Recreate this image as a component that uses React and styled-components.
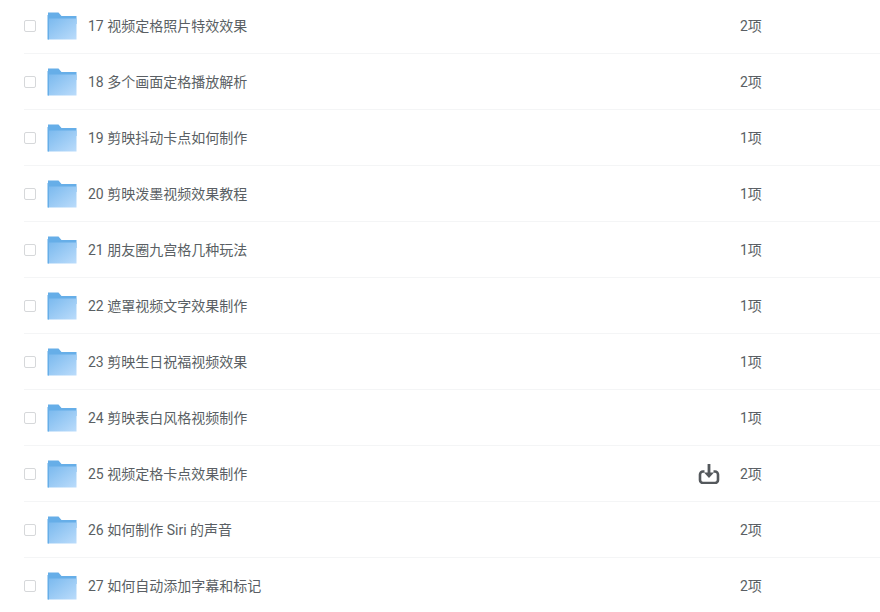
import React from 'react';
import styled, { createGlobalStyle } from 'styled-components';

const GlobalStyle = createGlobalStyle`
  html, body {
    margin: 0;
    height: 100%;
    overflow: hidden;
    background: #fff;
  }
`;

const FileList = styled.div`
  margin-top: -2px;
  padding-left: 24px;
  font-family: Roboto, "Noto Sans CJK SC", sans-serif;
  font-size: 14px;
  color: #5a5f64;
`;

const Row = styled.div`
  display: flex;
  align-items: center;
  height: 55px;
  border-bottom: 1px solid #f4f5f6;
`;

const Check = styled.span`
  box-sizing: border-box;
  flex: none;
  width: 12px;
  height: 12px;
  border: 1px solid #d6d8da;
  border-radius: 2px;
  background: #fff;
`;

const FolderIcon = styled.svg`
  flex: none;
  width: 30px;
  height: 28px;
  margin-left: 11px;
`;

const Name = styled.span`
  flex: none;
  width: 610px;
  margin: 0 0 2px 11px;
  white-space: nowrap;
`;

const Action = styled.span`
  flex: none;
  display: flex;
  justify-content: center;
  width: 22px;
  margin-right: 20px;
  color: #54585c;
`;

const Count = styled.span`
  flex: none;
  margin-bottom: 2px;
`;

const rows = [
  ['17 视频定格照片特效效果', '2项'],
  ['18 多个画面定格播放解析', '2项'],
  ['19 剪映抖动卡点如何制作', '1项'],
  ['20 剪映泼墨视频效果教程', '1项'],
  ['21 朋友圈九宫格几种玩法', '1项'],
  ['22 遮罩视频文字效果制作', '1项'],
  ['23 剪映生日祝福视频效果', '1项'],
  ['24 剪映表白风格视频制作', '1项'],
  ['25 视频定格卡点效果制作', '2项', true],
  ['26 如何制作 Siri 的声音', '2项'],
  ['27 如何自动添加字幕和标记', '2项'],
];

function Folder({ id }) {
  return (
    <FolderIcon viewBox="0 0 30 28">
      <defs>
        <linearGradient id={id} x1="0" y1="0" x2="1" y2="1">
          <stop offset="0" stopColor="#7ab9ee" />
          <stop offset="1" stopColor="#bbdcfb" />
        </linearGradient>
      </defs>
      <path d="M1 0.5h10.5l3 3.5H29.5v8H1z" fill="#66aee8" />
      <path d="M1 6.5h28.5V27.5H1z" fill={`url(#${id})`} />
      <path d="M0.5 3v24.5h1.5V3z" fill="#66aee8" />
      <path d="M23 8.5h3v1h-3z" fill="#9cc8ee" />
    </FolderIcon>
  );
}

function SaveIcon() {
  return (
    <svg width="22" height="20" viewBox="0 0 22 20" fill="none">
      <path d="M6.5 7.5H5A3 3 0 0 0 2 10.5V16a3 3 0 0 0 3 3h12a3 3 0 0 0 3-3v-5.5a3 3 0 0 0-3-3h-1.5" stroke="currentColor" strokeWidth="2.6" />
      <path d="M9.6 0h2.8v8.5H16L11 14 6 8.5h3.6z" fill="currentColor" />
    </svg>
  );
}

export default function App() {
  return (
    <>
      <GlobalStyle />
      <FileList>
        {rows.map(([name, count, hovered], i) => (
          <Row key={name}>
            <Check />
            <Folder id={`folder-${i}`} />
            <Name>{name}</Name>
            <Action>{hovered && <SaveIcon />}</Action>
            <Count>{count}</Count>
          </Row>
        ))}
      </FileList>
    </>
  );
}
